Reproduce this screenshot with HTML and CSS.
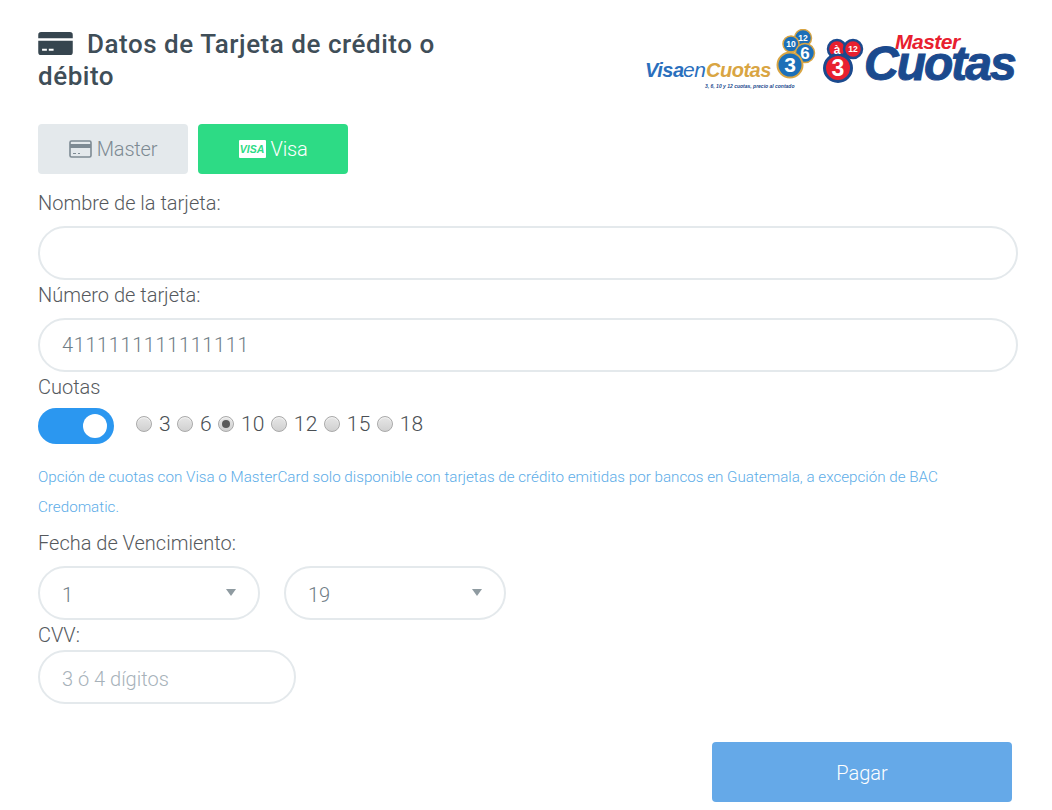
FILE: index.html
```html
<!DOCTYPE html>
<html lang="es">
<head>
<meta charset="utf-8">
<title>Datos de Tarjeta</title>
<link rel="stylesheet" href="styles.css">
</head>
<body>
<main class="page">
  <header class="head">
    <h1 class="title">
      <svg class="title-icon" viewBox="0 0 36 24"><path fill="#36454f" fill-rule="evenodd" d="M3 0h30a3 3 0 0 1 3 3v3.500H0V3a3 3 0 0 1 3-3zM0 9h36v12a3 3 0 0 1-3 3H3a3 3 0 0 1-3-3zm4 8.500v2h5v-2zm7 0v2h5v-2z"/></svg>
      Datos de Tarjeta de crédito o débito
    </h1>
    <svg class="logos" viewBox="0 0 380 66" width="380" height="66">
      <g>
        <text x="3" y="48" class="l-visa">Visa</text><text x="41" y="48" class="l-en">en</text><text x="64" y="48" class="l-cuotas">Cuotas</text>
        <text x="63" y="59" class="l-small">3, 6, 10 y 12 cuotas, precio al contado</text>
        <circle cx="161" cy="9" r="8.500" fill="#1c6fb8" stroke="#d9a543" stroke-width="1.500"/>
        <circle cx="149" cy="15" r="8" fill="#1c6fb8" stroke="#d9a543" stroke-width="1.500"/>
        <circle cx="163" cy="24" r="9.500" fill="#1c6fb8" stroke="#d9a543" stroke-width="1.500"/>
        <circle cx="148" cy="36" r="12.500" fill="#1c6fb8" stroke="#d9a543" stroke-width="2"/>
        <text x="161" y="12" class="n-s">12</text><text x="149" y="18" class="n-s">10</text><text x="163" y="30" class="n-m">6</text><text x="148" y="43" class="n-l">3</text>
      </g>
      <g>
        <circle cx="195" cy="20" r="9" fill="#e8202f" stroke="#1b4a8e" stroke-width="2.500"/>
        <circle cx="211" cy="20" r="9" fill="#e8202f" stroke="#1b4a8e" stroke-width="2.500"/>
        <circle cx="196" cy="39" r="13.500" fill="#e8202f" stroke="#1b4a8e" stroke-width="3"/>
        <text x="195" y="25" class="n-a">à</text><text x="211" y="23" class="n-s">12</text><text x="196" y="47" class="n-l2">3</text>
        <text x="253" y="20" class="l-master">Master</text>
        <text x="222" y="51" class="l-mc">Cuotas</text>
      </g>
    </svg>
  </header>

  <div class="tabs">
    <button class="tab tab-master" type="button">
      <svg class="tab-icon" viewBox="0 0 23 18"><path fill="none" stroke="#7d8a93" stroke-width="1.600" d="M2.500 1h18a1.500 1.500 0 0 1 1.500 1.500v13a1.500 1.500 0 0 1-1.500 1.500h-18A1.500 1.500 0 0 1 1 15.500v-13A1.500 1.500 0 0 1 2.500 1z"/><path fill="#7d8a93" d="M1 4h21v4H1zM4 13h3v1H4zM9 13h2v1H9z"/></svg>
      Master
    </button>
    <button class="tab tab-visa" type="button">
      <span class="visa-mark">VISA</span>
      Visa
    </button>
  </div>

  <form class="form">
    <label class="field-label" for="nombre">Nombre de la tarjeta:</label>
    <input class="input" id="nombre" type="text">

    <label class="field-label label-second" for="numero">Número de tarjeta:</label>
    <input class="input" id="numero" type="text" value="4111111111111111">

    <div class="field-label label-cuotas">Cuotas</div>
    <div class="cuotas-row">
      <span class="toggle"><span class="knob"></span></span>
      <div class="radios">
        <label class="radio"><input type="radio" name="cuotas">3</label>
        <label class="radio"><input type="radio" name="cuotas">6</label>
        <label class="radio"><input type="radio" name="cuotas" checked>10</label>
        <label class="radio"><input type="radio" name="cuotas">12</label>
        <label class="radio"><input type="radio" name="cuotas">15</label>
        <label class="radio"><input type="radio" name="cuotas">18</label>
      </div>
    </div>

    <p class="note">Opción de cuotas con Visa o MasterCard solo disponible con tarjetas de crédito emitidas por bancos en Guatemala, a excepción de BAC Credomatic.</p>

    <div class="field-label label-fecha">Fecha de Vencimiento:</div>
    <div class="selects">
      <div class="select"><span class="select-value">1</span><i class="caret"></i></div>
      <div class="select"><span class="select-value">19</span><i class="caret"></i></div>
    </div>

    <label class="field-label label-cvv" for="cvv">CVV:</label>
    <input class="input input-cvv" id="cvv" type="text" placeholder="3 ó 4 dígitos">

    <div class="actions">
      <button class="pay" type="button">Pagar</button>
    </div>
  </form>
</main>
</body>
</html>
```
FILE: styles.css
```css
* { box-sizing: border-box; }
html, body { margin: 0; padding: 0; background: #fff; }
body { font-family: "Roboto", "Liberation Sans", sans-serif; font-weight: 300; color: #4a4f54; overflow: hidden; }
.page { width: 1052px; height: 810px; padding: 29px 34px 0 38px; }

.head { display: flex; justify-content: space-between; align-items: flex-start; height: 95px; }
.title { margin: -1px 0 0; width: 420px; font-size: 26px; line-height: 32px; font-weight: 500; color: #3f4e58; letter-spacing: 0.53px; }
.title-icon { width: 35px; height: 23px; margin-right: 7px; vertical-align: -2px; }
.logos { margin: 0 -4px 0 0; }
.logos text { font-family: "Liberation Sans", sans-serif; font-weight: 700; font-style: italic; }
.logos .l-visa { font-size: 20px; fill: #2a6fbd; letter-spacing: -0.4px; }
.logos .l-en { font-size: 21px; fill: #2a6fbd; font-weight: 400; letter-spacing: -0.4px; }
.logos .l-cuotas { font-size: 20px; fill: #d9a543; letter-spacing: -0.5px; }
.logos .l-small { font-size: 5px; fill: #1b4a8e; }
.logos .n-s { font-size: 8.500px; fill: #fff; text-anchor: middle; font-style: normal; }
.logos .n-m { font-size: 17px; fill: #fff; text-anchor: middle; font-style: normal; }
.logos .n-l { font-size: 21px; fill: #fff; text-anchor: middle; font-style: normal; }
.logos .n-l2 { font-size: 23px; fill: #fff; text-anchor: middle; font-style: normal; }
.logos .n-a { font-size: 12px; fill: #fff; text-anchor: middle; font-style: normal; }
.logos .l-master { font-size: 21px; fill: #e8202f; letter-spacing: -0.5px; }
.logos .l-mc { font-size: 48px; fill: #1b4a8e; letter-spacing: -2px; stroke: #1b4a8e; stroke-width: 1px; }

.tabs { display: flex; gap: 10px; }
.tab { width: 150px; height: 50px; border: 0; border-radius: 4px; font: 300 20px/1 "Roboto", sans-serif; display: flex; align-items: center; justify-content: center; gap: 5px; padding: 0; letter-spacing: -0.2px; }
.tab-master { background: #e4e9ec; color: #7d8a93; }
.tab-visa { background: #2ddb85; color: #fff; }
.tab-icon { width: 23px; height: 18px; }
.visa-mark { width: 27px; height: 18px; background: #fff; color: #2ddb85; font: italic 700 10.500px/18px "Liberation Sans", sans-serif; text-align: center; border-radius: 1px; letter-spacing: 0; }

.form { display: flex; flex-direction: column; align-items: flex-start; }
.field-label { display: block; font-size: 20px; line-height: 26px; color: #55595d; }
.form > .field-label:first-child { margin-top: 16px; margin-bottom: 10px; }
.label-second { margin-top: 2px; margin-bottom: 10px; }
.label-cuotas { margin-top: 2px; margin-bottom: 8px; }
.input { display: block; width: 980px; height: 54px; border: 2px solid #e4e9ec; border-radius: 27px; padding: 0 22px; font: 300 20px/1 "Roboto", sans-serif; color: #6f7c85; letter-spacing: 0.6px; background: #fff; outline: 0; }
.input-cvv { width: 258px; letter-spacing: 0; padding-top: 3px; }
.input-cvv::placeholder { color: #a7b2ba; opacity: 1; }

.cuotas-row { display: flex; align-items: center; height: 36px; }
.toggle { width: 76px; height: 36px; background: #2b97f0; border-radius: 18px; display: flex; align-items: center; justify-content: flex-end; padding-right: 7px; }
.knob { width: 24px; height: 24px; border-radius: 50%; background: #fff; }
.radios { display: flex; gap: 6px; margin-left: 22px; margin-top: -5px; }
.radio { display: flex; align-items: center; gap: 7px; font-size: 21px; letter-spacing: 0.3px; line-height: 26px; color: #4a4f54; }
.radio input { appearance: none; -webkit-appearance: none; margin: 0; width: 16px; height: 16px; border-radius: 50%; border: 1px solid #a9a9a9; background: linear-gradient(#e6e6e6, #d0d0d0); box-shadow: inset 0 1px 1px #f5f5f5; position: relative; }
.radio input:checked::after { content: ""; position: absolute; left: 3px; top: 3px; width: 8px; height: 8px; border-radius: 50%; background: #5a5a5a; }

.note { margin: 18px 0 0; width: 960px; font-size: 15.200px; line-height: 30px; color: #5dade8; font-weight: 300; }
.label-fecha { margin-top: 8px; margin-bottom: 10px; }
.selects { display: flex; gap: 24px; }
.select { width: 222px; height: 54px; border: 2px solid #e4e9ec; border-radius: 27px; padding: 0 22px; display: flex; align-items: center; justify-content: space-between; font-size: 20px; color: #6f7c85; }
.select-value { padding-top: 3px; }
.caret { width: 0; height: 0; border-left: 5px solid transparent; border-right: 5px solid transparent; border-top: 7px solid #8f9ba1; margin-top: -1px; }
.label-cvv { margin-top: 2px; margin-bottom: 2px; }

.actions { align-self: stretch; display: flex; justify-content: flex-end; margin-top: 38px; padding-right: 6px; }
.pay { width: 300px; height: 60px; border: 0; border-radius: 4px; background: #65a9e8; color: #fff; font: 300 20px/1 "Roboto", sans-serif; padding: 2px 0 0; }
```
